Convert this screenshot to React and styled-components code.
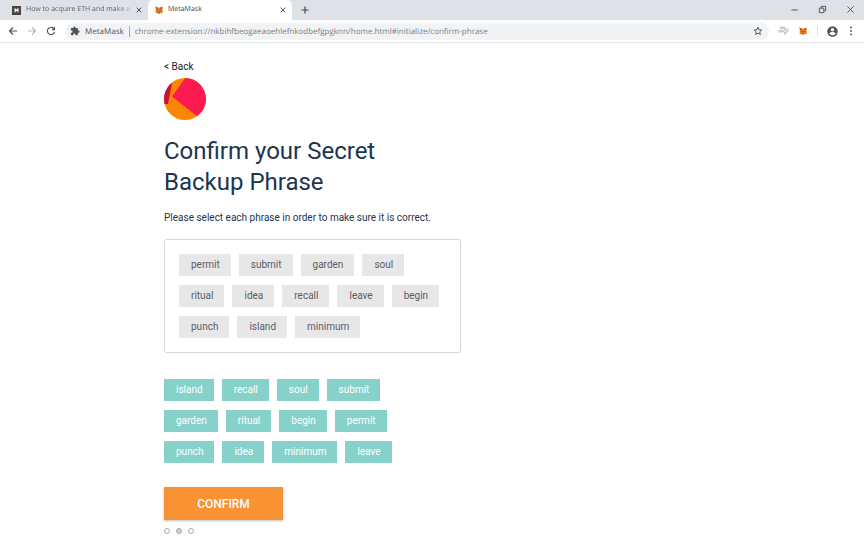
import React, { useState } from "react";
import styled, { createGlobalStyle } from "styled-components";

const GlobalStyle = createGlobalStyle`
  * { box-sizing: border-box; }
  body {
    margin: 0;
    background: #fff;
    color: #1b3551;
    font-family: Roboto, "Liberation Sans", sans-serif;
  }
  button, input { font: inherit; color: inherit; border: 0; padding: 0; margin: 0; background: none; text-rendering: inherit; }
`;

const chromeFont = `"Open Sans", "Noto Sans", sans-serif`;

const BrowserHeader = styled.header`
  font-family: ${chromeFont};
  text-rendering: geometricPrecision;
`;

const TabStrip = styled.div`
  display: flex;
  height: 20px;
  background: #dee1e6;
`;

const Tab = styled.div`
  display: flex;
  align-items: center;
  gap: 5px;
  width: ${(p) => (p.$active ? 144 : 148)}px;
  padding: 0 5px 0 ${(p) => (p.$active ? 7 : 12)}px;
  border-radius: 5px 5px 0 0;
  background: ${(p) => (p.$active ? "#fff" : "transparent")};
  color: ${(p) => (p.$active ? "#45494d" : "#5f6368")};
`;

const TabTitle = styled.button`
  flex: 1;
  min-width: 0;
  white-space: nowrap;
  text-align: left;
  font-size: 7px;
  line-height: 14px;
  mask-image: ${(p) => (p.$fade ? "linear-gradient(90deg, #000 86%, rgba(0, 0, 0, 0.3))" : "none")};
`;

const IconButton = styled.button`
  display: flex;
  flex: none;
  align-items: center;
  justify-content: center;
  width: ${(p) => p.$w || 12}px;
  height: 12px;
  color: ${(p) => p.$color || "#4a4d51"};
`;

const NewTab = styled.div`
  display: flex;
  flex: 1;
  align-items: center;
  padding-left: 7px;
`;

const WindowControls = styled.div`
  display: flex;
  align-items: center;
  gap: 16px;
  padding: 0 8px 2px 0;
`;

const Toolbar = styled.div`
  display: flex;
  align-items: center;
  height: 23px;
  padding: 0 8px 0 7px;
  border-bottom: 1px solid #e6e7e8;
`;

const Nav = styled.nav`
  display: flex;
  gap: 7px;
  width: 58px;
`;

const AddressBar = styled.form`
  display: flex;
  flex: 1;
  align-items: center;
  height: 17px;
  padding: 0 5px;
  border-radius: 9px;
  background: #f1f3f4;
  font-size: 8px;
`;

const SiteName = styled.label`
  margin-left: 5px;
  padding-right: 5px;
  border-right: 1px solid #a5a8ab;
  line-height: 11px;
  color: #53575b;
`;

const AddressInput = styled.input`
  flex: 1;
  min-width: 0;
  height: 14px;
  margin-left: 5px;
  color: #7b7f83;
`;

const Extensions = styled.div`
  display: flex;
  align-items: center;
  gap: 8px;
  padding-left: 8px;
`;

const Divider = styled.span`
  width: 1px;
  height: 10px;
  background: #dcdee0;
`;

const Page = styled.main`
  display: flex;
  flex-direction: column;
  align-items: flex-start;
  max-width: 536px;
  margin: 0 auto;
  padding: 17px 0;
`;

const BackLink = styled.a`
  font-size: 10px;
  line-height: 14px;
  color: #222;
  text-decoration: none;
`;

const Avatar = styled.svg`
  width: 42px;
  height: 42px;
  margin-top: 4px;
`;

const Title = styled.h1`
  max-width: 240px;
  margin: 16px 0 0;
  font-size: 24px;
  font-weight: 400;
  line-height: 31px;
`;

const Hint = styled.p`
  margin: 13px 0 0;
  font-size: 10px;
  line-height: 14px;
`;

const Words = styled.div`
  display: flex;
  flex-wrap: wrap;
  gap: 9px 8px;
`;

const ChosenWords = styled(Words)`
  width: 100%;
  max-width: 297px;
  margin-top: 14px;
  padding: 14px;
  border: 1px solid #d6d6d6;
  border-radius: 3px;
`;

const WordPool = styled(Words)`
  max-width: 240px;
  margin-top: 26px;
`;

const Word = styled.button`
  height: 22px;
  padding: 0 11px 0 12px;
  font-size: 10px;
  line-height: 14px;
  background: ${(p) => (p.$picked ? "#86d2cb" : "#e7e7e7")};
  color: ${(p) => (p.$picked ? "#fff" : "#5b5d67")};
`;

const ConfirmButton = styled.button`
  width: 119px;
  height: 33px;
  margin-top: 24px;
  background: #f99233;
  box-shadow: 0 1px 2px rgba(0, 0, 0, 0.25);
  color: #fff;
  font-size: 12px;
  font-weight: 500;
`;

const Steps = styled.div`
  display: flex;
  gap: 6px;
  margin-top: 8px;
`;

const Step = styled.span`
  width: 6px;
  height: 6px;
  border: 1px solid #aaa;
  border-radius: 50%;
  background: ${(p) => (p.$current ? "#d0d0d0" : "#fff")};
`;

const Stroke = ({ d, size = 10, width = 1, children }) => (
  <svg width={size} height={size} viewBox="0 0 10 10" fill="none" stroke="currentColor" strokeWidth={width} aria-hidden="true">
    {d && <path d={d} />}
    {children}
  </svg>
);

const Close = ({ size = 8 }) => <Stroke size={size} width={1.2} d="M2 2l6 6M8 2l-6 6" />;

const Fox = () => (
  <svg width="8" height="8" viewBox="0 0 16 16" aria-hidden="true">
    <path d="M1 1l5 2h4l5-2v6l1 4-2 4-3-1-2 1-2-1-5 1-1-4 1-4z" fill="#ef8220" />
    <path d="M1 1l5 3-1 3-3-1zM15 1l-5 3 1 3 3-1z" fill="#b55a25" />
    <path d="M4 8l3 1-1 2zM12 8l-3 1 1 2zM6 13h4l-1 2H7z" fill="#39332f" />
  </svg>
);

const chosen = ["permit", "submit", "garden", "soul", "ritual", "idea", "recall", "leave", "begin", "punch", "island", "minimum"];
const pool = ["island", "recall", "soul", "submit", "garden", "ritual", "begin", "permit", "punch", "idea", "minimum", "leave"];

function Browser() {
  const [url, setUrl] = useState("chrome-extension://nkbihfbeogaeaoehlefnkodbefgpgknn/home.html#initialize/confirm-phrase");
  return (
    <BrowserHeader>
      <TabStrip>
        <Tab>
          <svg width="9" height="9" viewBox="0 0 10 10" aria-hidden="true">
            <rect width="10" height="10" fill="#49443f" />
            <path d="M3.500 7V3.500l1.500 1.500 1.500-1.500V7" fill="none" stroke="#fff" strokeWidth="1.3" />
          </svg>
          <TabTitle $fade>How to acquire ETH and make a</TabTitle>
          <IconButton $w={8} aria-label="Close tab"><Close /></IconButton>
        </Tab>
        <Tab $active>
          <Fox />
          <TabTitle>MetaMask</TabTitle>
          <IconButton $w={8} aria-label="Close tab"><Close /></IconButton>
        </Tab>
        <NewTab>
          <IconButton aria-label="New tab"><Stroke d="M5 1.500v7M1.500 5h7" width={1.2} /></IconButton>
        </NewTab>
        <WindowControls>
          <IconButton aria-label="Minimize"><Stroke size={9} d="M1.500 5.500h7" /></IconButton>
          <IconButton aria-label="Restore"><Stroke size={9} d="M1.500 3.500h5v5h-5zM3.500 3.500v-2h5v5h-2" /></IconButton>
          <IconButton aria-label="Close window"><Stroke size={9} d="M1.500 1.500l7 7M8.500 1.500l-7 7" /></IconButton>
        </WindowControls>
      </TabStrip>
      <Toolbar>
        <Nav>
          <IconButton aria-label="Back"><Stroke width={1.1} d="M9 5H1.500M5 1.500L1.500 5 5 8.500" /></IconButton>
          <IconButton $color="#b4b7ba" aria-label="Forward"><Stroke width={1.1} d="M1 5h7.500M5 1.500L8.500 5 5 8.500" /></IconButton>
          <IconButton aria-label="Reload">
            <Stroke width={1.1}>
              <path d="M8.500 6A3.600 3.600 0 1 1 7.600 2.500" />
              <path d="M9 0.800V4.200H5.600z" fill="currentColor" stroke="none" />
            </Stroke>
          </IconButton>
        </Nav>
        <AddressBar onSubmit={(e) => e.preventDefault()}>
          <svg width="10" height="10" viewBox="0 0 24 24" fill="#505357" aria-hidden="true">
            <path d="M20.500 11H19V7a2 2 0 0 0-2-2h-4V3.500a2.500 2.500 0 0 0-5 0V5H4a2 2 0 0 0-2 2v3.800h1.500a2.700 2.700 0 0 1 0 5.400H2V20a2 2 0 0 0 2 2h3.800v-1.500a2.700 2.700 0 0 1 5.400 0V22H17a2 2 0 0 0 2-2v-4h1.500a2.500 2.500 0 0 0 0-5z" />
          </svg>
          <SiteName htmlFor="address">MetaMask</SiteName>
          <AddressInput id="address" value={url} onChange={(e) => setUrl(e.target.value)} />
          <IconButton type="button" aria-label="Bookmark">
            <Stroke width={0.9} d="M5 1.200l1.100 2.600 2.800.2-2.200 1.900.7 2.700L5 7.200 2.600 8.600l.7-2.700L1.100 4l2.800-.2z" />
          </IconButton>
        </AddressBar>
        <Extensions>
          <IconButton aria-label="Extension">
            <svg width="11" height="10" viewBox="0 0 11 10" aria-hidden="true">
              <path d="M2 0.500h5v2h3.500v3L6 9.500V6.500H0.500v-3H2z" fill="#cbcbcb" />
              <path d="M2 3.500h4M4.500 7l5-3.500" stroke="#fff" strokeWidth="0.8" />
            </svg>
          </IconButton>
          <IconButton aria-label="MetaMask"><Fox /></IconButton>
          <Divider />
          <IconButton aria-label="Profile">
            <svg width="11" height="11" viewBox="0 0 22 22" aria-hidden="true">
              <circle cx="11" cy="11" r="10.500" fill="#505357" />
              <circle cx="11" cy="7.500" r="3.500" fill="#fff" />
              <path d="M4.500 15c2-4 11-4 13 0-3 4.500-10 4.500-13 0z" fill="#fff" />
            </svg>
          </IconButton>
          <IconButton $w={10} aria-label="Menu">
            <svg width="10" height="10" viewBox="0 0 10 10" fill="currentColor" aria-hidden="true">
              <circle cx="5" cy="1.500" r="0.900" /><circle cx="5" cy="5" r="0.900" /><circle cx="5" cy="8.500" r="0.900" />
            </svg>
          </IconButton>
        </Extensions>
      </Toolbar>
    </BrowserHeader>
  );
}

export default function App() {
  return (
    <>
      <GlobalStyle />
      <Browser />
      <Page>
        <BackLink href="#back">&lt; Back</BackLink>
        <Avatar viewBox="0 0 42 42" aria-hidden="true">
          <clipPath id="disc"><circle cx="21" cy="21" r="21" /></clipPath>
          <g clipPath="url(#disc)">
            <path d="M0 0h42v42H0z" fill="#fb8602" />
            <path d="M0 0h9L4 26H0z" fill="#c8143c" />
            <path d="M22 -1L8 18.500 34 39 46 28V-1z" fill="#fc1a50" />
          </g>
        </Avatar>
        <Title>Confirm your Secret Backup Phrase</Title>
        <Hint>Please select each phrase in order to make sure it is correct.</Hint>
        <ChosenWords>
          {chosen.map((w) => <Word key={w}>{w}</Word>)}
        </ChosenWords>
        <WordPool>
          {pool.map((w) => <Word key={w} $picked>{w}</Word>)}
        </WordPool>
        <ConfirmButton>CONFIRM</ConfirmButton>
        <Steps>
          <Step />
          <Step $current />
          <Step />
        </Steps>
      </Page>
    </>
  );
}
